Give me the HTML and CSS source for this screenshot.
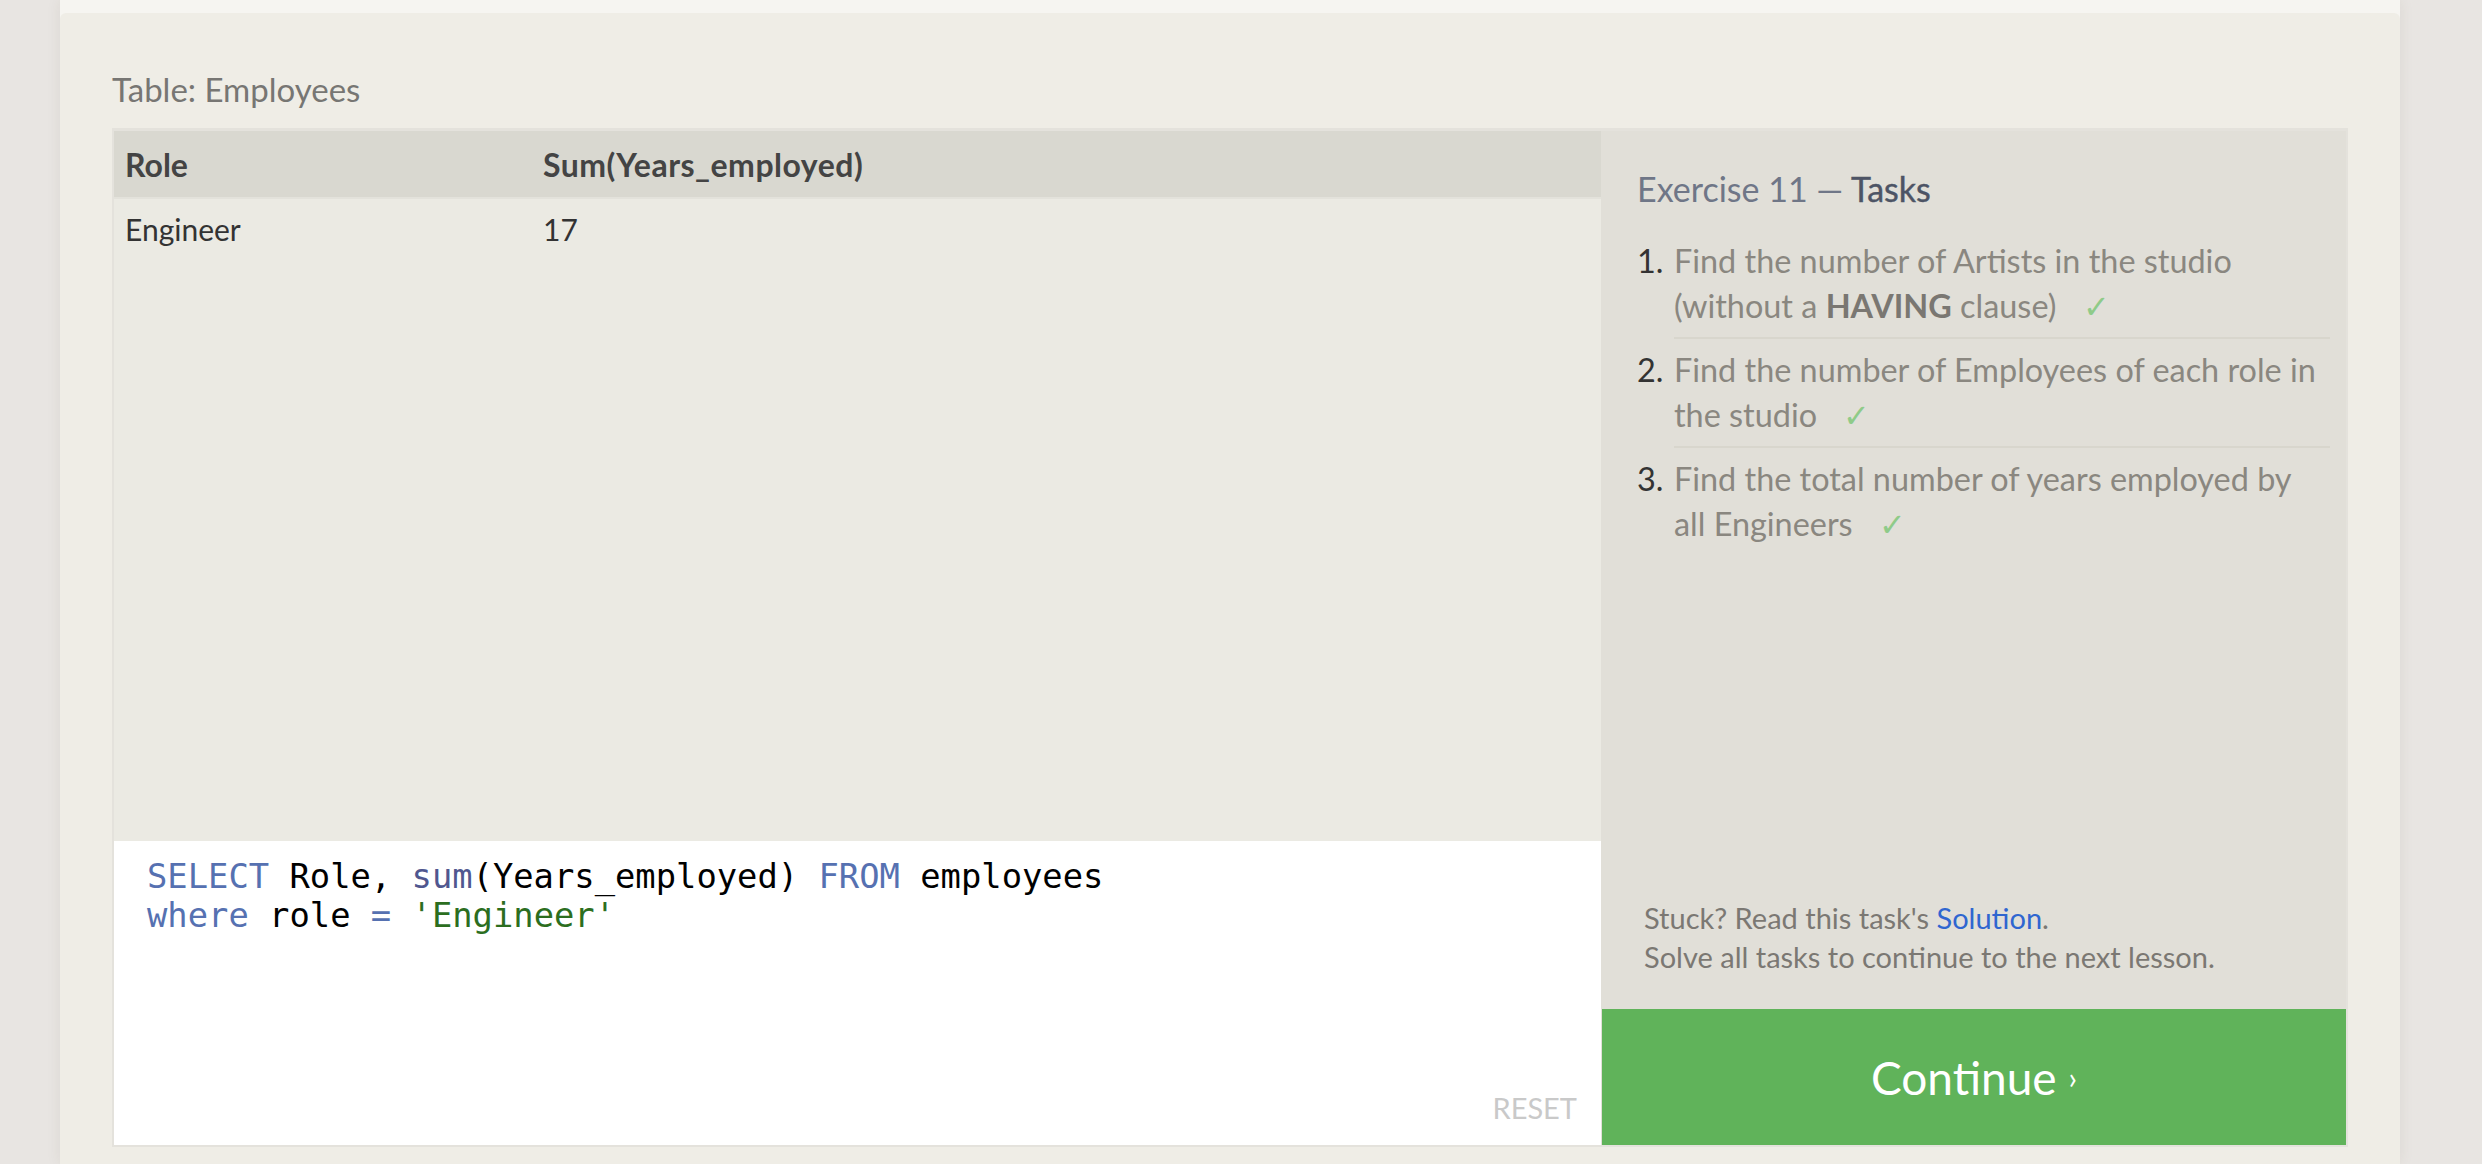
FILE: index.html
```html
<!DOCTYPE html>
<html>
<head>
<meta charset="utf-8">
<title>SQL Lesson</title>
<link rel="stylesheet" href="styles.css">
</head>
<body>
<div class="page">
  <div class="card">
    <div class="table-label">Table: Employees</div>
    <div class="exercise">
      <div class="left">
        <div class="results">
          <table class="result-table">
            <thead>
              <tr><th class="c1">Role</th><th class="c2">Sum(Years_employed)</th></tr>
            </thead>
            <tbody>
              <tr><td class="c1">Engineer</td><td class="c2">17</td></tr>
            </tbody>
          </table>
        </div>
        <div class="editor">
<pre class="code"><span class="kw">SELECT</span> Role, <span class="fn">sum</span>(Years_employed) <span class="kw">FROM</span> employees
<span class="kw">where</span> role <span class="kw">=</span> <span class="str">'Engineer'</span></pre>
          <div class="reset">RESET</div>
        </div>
      </div>
      <div class="tasks">
        <h3 class="tasks-title">Exercise 11 — <span class="strong">Tasks</span></h3>
        <ol class="task-list">
          <li><span class="num">1.</span><span class="txt">Find the number of Artists in the studio<br>(without a <b>HAVING</b> clause) <span class="check">✓</span></span></li>
          <li><span class="num">2.</span><span class="txt">Find the number of Employees of each role in<br>the studio <span class="check">✓</span></span></li>
          <li><span class="num">3.</span><span class="txt">Find the total number of years employed by<br>all Engineers <span class="check">✓</span></span></li>
        </ol>
        <div class="hint">
          <p>Stuck? Read this task's <a class="link">Solution</a>.</p>
          <p>Solve all tasks to continue to the next lesson.</p>
        </div>
        <div class="continue">Continue <span class="chev">›</span></div>
      </div>
    </div>
  </div>
</div>
</body>
</html>
```

FILE: styles.css
```css
html, body {
  margin: 0;
  padding: 0;
}
body {
  background: #e8e5e2;
  font-family: Lato, "Noto Sans", sans-serif;
  height: 1164px;
  overflow: hidden;
}
.page {
  margin-left: 60px;
  width: 2340px;
  height: 1164px;
  box-sizing: border-box;
  padding-top: 13px;
  background: #f6f5f1;
  box-shadow: 0 0 14px rgba(80, 60, 40, 0.08);
}
.card {
  height: 100%;
  box-sizing: border-box;
  background: #efede6;
  border-radius: 6px 6px 0 0;
  padding: 56px 52px 0;
}
.table-label {
  font-size: 33px;
  line-height: 40px;
  color: #777673;
  margin-bottom: 19px;
}
.exercise {
  display: grid;
  grid-template-columns: 1487px 1fr;
  height: 1014px;
  border: 2px solid #e4e2dc;
  border-top-width: 3px;
}
.left {
  display: flex;
  flex-direction: column;
  background: #ebeae3;
  min-height: 0;
}
.results {
  flex: 1;
}
.result-table {
  border-collapse: collapse;
  width: 100%;
  table-layout: fixed;
}
.result-table th {
  background: #d9d8d0;
  height: 66px;
  padding: 0 11px;
  text-align: left;
  font-size: 32px;
  font-weight: 700;
  color: #444;
  border-bottom: 2px solid #e3e2db;
}
.result-table th.c2 {
  letter-spacing: 0.5px;
}
.result-table td {
  height: 60px;
  padding: 0 11px;
  font-size: 30px;
  color: #333;
}
.result-table .c1 {
  width: 396px;
}
.editor {
  height: 304px;
  background: #fff;
  display: flex;
  flex-direction: column;
}
.code {
  flex: 1;
  margin: 0;
  padding: 16px 33px 0;
  font-family: "DejaVu Sans Mono", monospace;
  font-size: 33.8px;
  line-height: 39px;
  color: #000;
}
.kw { color: #5671b1; }
.fn { color: #50578f; }
.str { color: #2c6e1f; }
.reset {
  align-self: flex-end;
  font-size: 29px;
  line-height: 36px;
  color: #c9c9c9;
  margin: 0 24px 19px 0;
}
.tasks {
  background: #e1dfd8;
  display: flex;
  flex-direction: column;
  padding-top: 38px;
  min-height: 0;
}
.tasks-title {
  margin: 0 0 21px 36px;
  font-size: 34px;
  line-height: 40px;
  font-weight: 400;
  color: #6f7687;
}
.tasks-title .strong {
  color: #4d5465;
  -webkit-text-stroke: 0.4px #4d5465;
}
.task-list {
  list-style: none;
  margin: 0;
  padding: 0 16px 0 36px;
}
.task-list li {
  display: flex;
  align-items: flex-start;
  font-size: 32.4px;
  line-height: 45px;
  padding-top: 8px;
}
.task-list .num {
  width: 37px;
  flex: none;
  color: #333;
}
.task-list .txt {
  flex: 1;
  color: #8a8780;
  white-space: nowrap;
  padding-bottom: 9px;
  border-bottom: 2px solid #d8d6cd;
}
.task-list li:last-child .txt {
  border-bottom: none;
}
.task-list b {
  color: #7a7772;
  font-weight: 700;
}
.check {
  color: #8fcb89;
  margin-left: 18px;
  line-height: 0;
}
.hint {
  margin-top: auto;
  padding: 0 20px 33px 43px;
  font-size: 29px;
  line-height: 39px;
  color: #7b7873;
}
.hint p {
  margin: 0;
}
.link {
  color: #2f66d0;
}
.continue {
  height: 136px;
  flex: none;
  background: #60b35a;
  color: #fff;
  font-size: 46px;
  display: flex;
  align-items: center;
  justify-content: center;
  margin-left: 1px;
}
.chev {
  font-size: 30px;
  margin-left: 12px;
}
```
